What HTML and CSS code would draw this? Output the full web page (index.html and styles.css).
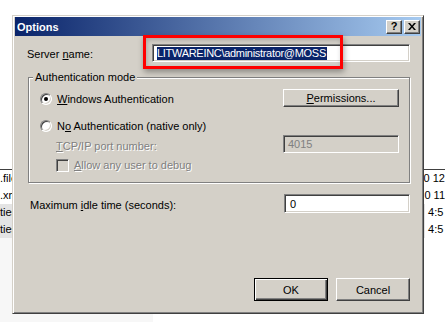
FILE: index.html
```html
<!DOCTYPE html>
<html lang="en">
<head>
  <meta charset="UTF-8">
  <title>Options</title>
  <link rel="stylesheet" href="styles.css">
</head>
<body>

  <div class="desk-top"></div>
  <div class="file-list">
    <div class="file-row"><span class="file-name">.file</span><span class="file-date">0 12</span></div>
    <div class="file-row"><span class="file-name">.xml</span><span class="file-date">0 11</span></div>
    <div class="file-row dim"><span class="file-name">ties</span><span class="file-date">&nbsp;4:5</span></div>
    <div class="file-row dim"><span class="file-name">ties</span><span class="file-date">&nbsp;4:5</span></div>
  </div>
  <div class="side-pane"></div>

  <div class="dialog">
    <div class="titlebar">
      <span class="title">Options</span>
      <span class="caption-buttons">
        <span class="cap-btn">?</span>
        <span class="cap-btn">
          <svg width="8" height="7" viewBox="0 0 8 7"><path d="M0 0h2l2 2.5L6 0h2L5 3.5 8 7H6L4 4.5 2 7H0l3-3.5z" fill="#000"/></svg>
        </span>
      </span>
    </div>

    <div class="content">
      <div class="field-row server">
        <label class="field-label">Server <u>n</u>ame:</label>
        <div class="textbox wide"><span class="selected">LITWAREINC\administrator@MOSS</span></div>
      </div>

      <fieldset class="group">
        <legend>Authentication mode</legend>
        <div class="group-row r1">
          <div class="opt"><span class="radio checked"></span><span><u>W</u>indows Authentication</span></div>
          <div class="btn perm"><u>P</u>ermissions...</div>
        </div>
        <div class="group-row r2">
          <div class="opt"><span class="radio"></span><span>N<u>o</u> Authentication (native only)</span></div>
        </div>
        <div class="group-row r3">
          <div class="opt sub disabled"><span><u>T</u>CP/IP port number:</span></div>
          <div class="textbox port">4015</div>
        </div>
        <div class="group-row r4">
          <div class="opt sub disabled"><span class="check"></span><span><u>A</u>llow any user to debug</span></div>
        </div>
      </fieldset>

      <div class="field-row idle">
        <label class="field-label">Maximum <u>i</u>dle time (seconds):</label>
        <div class="textbox short">0</div>
      </div>

      <div class="actions">
        <div class="btn default">OK</div>
        <div class="btn">Cancel</div>
      </div>
    </div>
  </div>

  <div class="callout"></div>

</body>
</html>
```

FILE: styles.css
```css
* {
  box-sizing: border-box;
}

body {
  margin: 0;
  width: 445px;
  height: 322px;
  overflow: hidden;
  position: relative;
  background: #fff;
  color: #000;
  font-family: 'Liberation Sans', Arial, sans-serif;
  font-size: 11px;
}

u {
  text-decoration: underline;
  text-underline-offset: 1px;
}

/* window behind the dialog */
.desk-top {
  height: 169px;
}

.file-list {
  border-top: 1px solid #404040;
}

.file-row {
  display: flex;
  height: 17px;
  line-height: 17px;
  white-space: nowrap;
}

.file-name {
  width: 425px;
  overflow: hidden;
}

.file-row.dim .file-name {
  background: #e4e4e4;
}

.file-date {
  flex: 1;
}

.side-pane {
  width: 153px;
  height: 84px;
  background: #f7f7f7;
}

/* dialog */
.dialog {
  position: absolute;
  left: 12px;
  top: 15px;
  width: 412px;
  height: 299px;
  padding: 1px 2px 2px 2px;
  background: #d4d0c8;
  border: 1px solid;
  border-color: #d4d0c8 #404040 #404040 #d4d0c8;
  box-shadow: inset 1px 1px #fff, inset -1px -1px #808080;
  display: flex;
  flex-direction: column;
}

.titlebar {
  height: 19px;
  padding: 0 1px 0 2px;
  display: flex;
  align-items: center;
  justify-content: space-between;
  background: linear-gradient(90deg, #0a246a, #a6caf0);
  color: #fff;
  font-weight: bold;
  font-size: 11px;
}

.caption-buttons {
  display: flex;
  gap: 2px;
}

.cap-btn {
  width: 16px;
  height: 14px;
  display: flex;
  align-items: center;
  justify-content: center;
  background: #d4d0c8;
  color: #000;
  border: 1px solid;
  border-color: #fff #404040 #404040 #fff;
  box-shadow: inset -1px -1px #808080;
  font-size: 11px;
  font-weight: bold;
  line-height: 1;
}

.content {
  flex: 1;
  padding: 0 11px 0 12px;
  display: flex;
  flex-direction: column;
}

.field-row {
  display: flex;
  align-items: center;
}

.field-row.server {
  margin-top: 8px;
  height: 18px;
}

.field-row.server .field-label {
  width: 125px;
  padding-top: 1px;
}

.field-row.idle {
  margin-top: 11px;
  height: 19px;
  padding-left: 3px;
}

.field-row.idle .field-label {
  flex: 1;
  padding-top: 3px;
}

.textbox {
  height: 100%;
  display: flex;
  align-items: center;
  padding-left: 4px;
  background: #fff;
  border: 1px solid;
  border-color: #808080 #fff #fff #808080;
  box-shadow: inset 1px 1px #404040, inset -1px -1px #d4d0c8;
}

.textbox.wide {
  flex: 1;
}

.textbox.short {
  width: 126px;
  padding-left: 5px;
}

.textbox.port {
  width: 116px;
  height: 18px;
  background: #d4d0c8;
  color: #808080;
}

.selected {
  background: #0a246a;
  color: #fff;
  line-height: 13px;
  letter-spacing: -0.3px;
  padding-right: 1px;
}

/* group box */
.group {
  margin: 9px 0 0 1px;
  padding: 5px 10px 9px 11px;
  border: 1px solid #808080;
  box-shadow: inset 1px 1px #fff, 1px 1px #fff;
  min-width: 0;
}

.group legend {
  margin-left: -7px;
  padding: 0 2px;
  line-height: 13px;
  background: #d4d0c8;
}

.group-row {
  display: flex;
  align-items: center;
  justify-content: space-between;
  height: 18px;
}

.group-row.r1 .opt {
  padding-top: 2px;
}

.group-row.r2 {
  margin-top: 10px;
}

.group-row.r3 .opt {
  padding-top: 3px;
}

.group-row.r4 {
  margin-top: 4px;
  height: 16px;
}

.opt {
  display: flex;
  align-items: center;
  gap: 5px;
}

.opt.sub {
  padding-left: 16px;
}

.disabled {
  color: #808080;
  text-shadow: 1px 1px #fff;
}

.radio {
  width: 12px;
  height: 12px;
  border-radius: 50%;
  background: #fff;
  border: 1px solid;
  border-color: #808080 #fff #fff #808080;
  box-shadow: inset 1px 1px #404040, inset -1px -1px #d4d0c8;
  display: flex;
  align-items: center;
  justify-content: center;
}

.radio.checked::after {
  content: '';
  width: 4px;
  height: 4px;
  border-radius: 50%;
  background: #000;
}

.check {
  width: 13px;
  height: 13px;
  background: #d4d0c8;
  border: 1px solid;
  border-color: #808080 #fff #fff #808080;
  box-shadow: inset 1px 1px #404040, inset -1px -1px #d4d0c8;
}

/* buttons */
.btn {
  display: flex;
  align-items: center;
  justify-content: center;
  background: #d4d0c8;
  border: 1px solid;
  border-color: #fff #404040 #404040 #fff;
  box-shadow: inset -1px -1px #808080;
}

.btn.perm {
  width: 116px;
  height: 18px;
}

.btn.default {
  border-color: #000;
  box-shadow: inset 1px 1px #fff, inset -1px -1px #404040, inset -2px -2px #808080;
}

.actions {
  margin-top: 65px;
  display: flex;
  justify-content: flex-end;
  gap: 8px;
}

.actions .btn {
  width: 74px;
  height: 23px;
}

/* red annotation drawn over the screenshot */
.callout {
  position: absolute;
  left: 143px;
  top: 35px;
  width: 200px;
  height: 34px;
  border: 3px solid #f00;
  box-shadow: 1px 3px 6px rgba(0, 0, 0, 0.35), inset 1px 2px 5px rgba(0, 0, 0, 0.2);
}
```
